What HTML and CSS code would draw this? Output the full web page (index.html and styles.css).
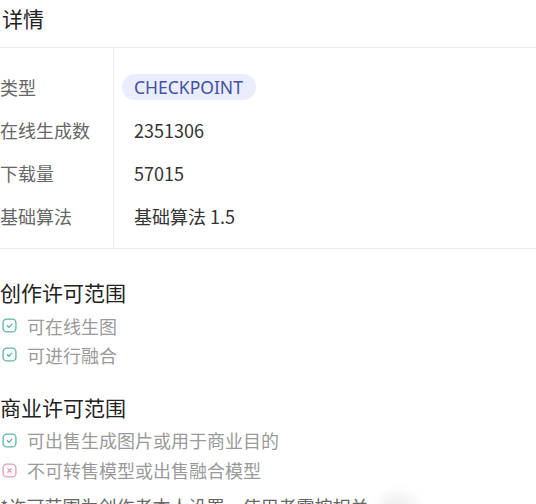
FILE: index.html
```html
<!DOCTYPE html>
<html lang="zh">
<head>
<meta charset="utf-8">
<link rel="stylesheet" href="styles.css">
</head>
<body>
<div class="page">
  <h2 class="title">详情</h2>
  <div class="table">
    <div class="labels">
      <div class="cell">类型</div>
      <div class="cell">在线生成数</div>
      <div class="cell">下载量</div>
      <div class="cell">基础算法</div>
    </div>
    <div class="values">
      <div class="cell"><span class="badge">CHECKPOINT</span></div>
      <div class="cell"><span class="val">2351306</span></div>
      <div class="cell"><span class="val">57015</span></div>
      <div class="cell"><span class="val">基础算法 1.5</span></div>
    </div>
  </div>

  <h3 class="section">创作许可范围</h3>
  <ul class="list">
    <li><svg class="ico ok" viewBox="0 0 14 14"><rect x="1" y="1" width="12" height="12" rx="3.5"/><path d="M5 7.2l1.5 1.5 2.7-3"/></svg>可在线生图</li>
    <li><svg class="ico ok" viewBox="0 0 14 14"><rect x="1" y="1" width="12" height="12" rx="3.5"/><path d="M5 7.2l1.5 1.5 2.7-3"/></svg>可进行融合</li>
  </ul>

  <h3 class="section second">商业许可范围</h3>
  <ul class="list tight">
    <li class="wide"><svg class="ico ok" viewBox="0 0 14 14"><rect x="1" y="1" width="12" height="12" rx="3.5"/><path d="M5 7.2l1.5 1.5 2.7-3"/></svg>可出售生成图片或用于商业目的</li>
    <li class="wide"><svg class="ico no" viewBox="0 0 14 14"><rect x="1" y="1" width="12" height="12" rx="3.5"/><path d="M5.4 5.4l3.2 3.2M8.6 5.4l-3.2 3.2"/></svg>不可转售模型或出售融合模型</li>
  </ul>
  <p class="note">*许可范围为创作者本人设置，使用者需按相关</p>
  <div class="shade"></div>
</div>
</body>
</html>
```

FILE: styles.css
```css
html, body {
  margin: 0;
  padding: 0;
  background: #fff;
}
body {
  font-family: "Noto Sans CJK SC", "Noto Sans", sans-serif;
  color: #222;
  overflow: hidden;
}
.page {
  position: relative;
  width: 536px;
  height: 504px;
  overflow: hidden;
}
.title {
  margin: 0;
  padding-left: 2px;
  font-size: 21px;
  font-weight: 400;
  line-height: 36px;
  height: 47px;
  border-bottom: 1px solid #ececec;
  color: #222;
}
.table {
  display: flex;
  border-bottom: 1px solid #ececec;
}
.labels {
  width: 113px;
  border-right: 1px solid #ececec;
  padding: 17px 0 11px;
}
.values {
  flex: 1;
  padding: 17px 0 11px 8px;
}
.cell {
  height: 43px;
  display: flex;
  align-items: center;
  font-size: 18px;
}
.labels .cell {
  color: #666;
}
.val {
  padding-left: 12px;
  color: #333;
}
.badge {
  display: inline-flex;
  align-items: center;
  height: 26px;
  padding: 0 13px 0 12px;
  border-radius: 13px;
  background: #e9edfc;
  color: #4450a6;
  font-family: "Noto Sans", sans-serif;
  font-size: 17.5px;
}
.section {
  margin: 29px 0 0;
  font-size: 21px;
  font-weight: 400;
  line-height: 28px;
  color: #222;
}
.section.second {
  margin-top: 24px;
}
.list {
  list-style: none;
  margin: 5px 0 0;
  padding: 0;
}
.list.tight {
  margin-top: 4px;
}
.list li {
  display: flex;
  align-items: center;
  height: 29px;
  font-size: 18px;
  color: #9a9a9a;
}
.list li.wide {
  height: 30px;
}
.ico {
  width: 15px;
  height: 15px;
  margin: 0 10px 0 2px;
  fill: none;
  stroke-width: 1.2;
  stroke-linecap: round;
  stroke-linejoin: round;
}
.ico.ok {
  stroke: #5ab3a3;
}
.ico.no {
  stroke: #e49ab5;
}
.note {
  margin: 9px 0 0;
  font-size: 18px;
  line-height: 24px;
  color: #666;
  white-space: nowrap;
}
.shade {
  position: absolute;
  left: 368px;
  top: 484px;
  width: 60px;
  height: 40px;
  background: radial-gradient(ellipse at 50% 75%, rgba(0, 0, 0, 0.1) 0%, rgba(0, 0, 0, 0.04) 40%, rgba(255, 255, 255, 0) 70%);
}
```
